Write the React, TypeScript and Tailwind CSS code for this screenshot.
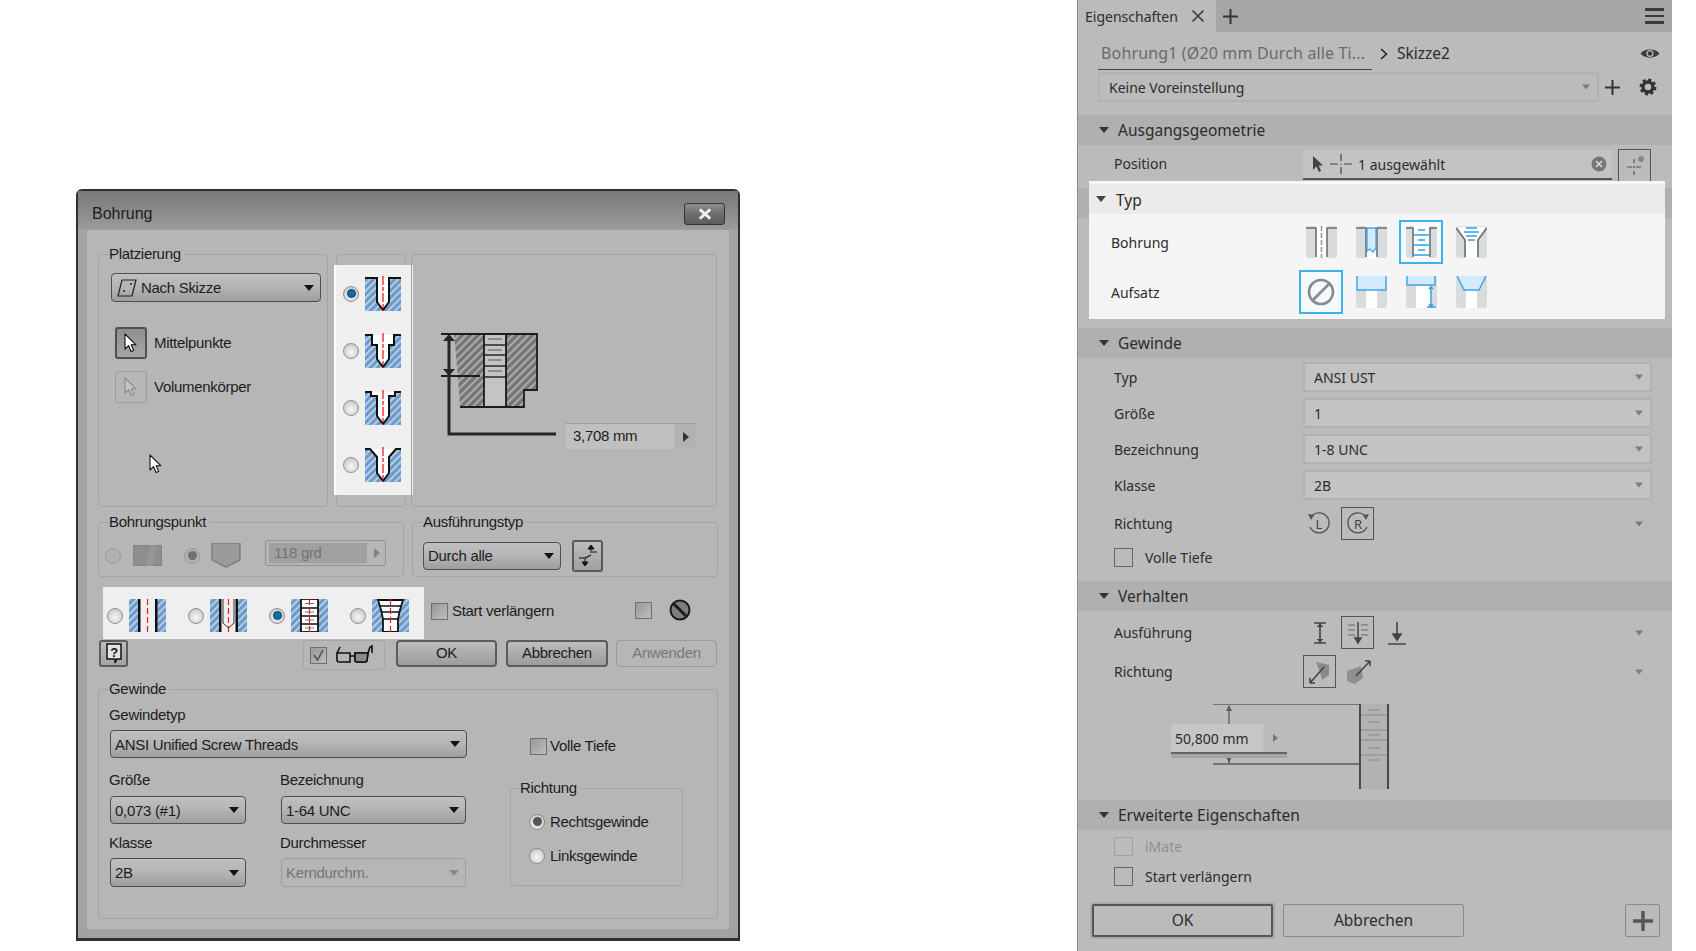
import React from "react";

const Tri = ({ c = "#111", w = 10, h = 6 }: { c?: string; w?: number; h?: number }) => (
  <svg width={w} height={h} viewBox="0 0 10 6"><polygon points="0,0 10,0 5,6" fill={c} /></svg>
);

const Radio = ({ on, dim, gray }: { on?: boolean; dim?: boolean; gray?: boolean }) => (
  <span className={`w-[16px] h-[16px] shrink-0 rounded-full border border-[#8f8f8f] flex items-center justify-center ${dim ? "bg-[#b0b0b0] opacity-70" : "bg-[radial-gradient(circle_at_50%_60%,#f8f8f8,#bdbdbd)]"}`}>
    {on && <span className={`w-[9px] h-[9px] rounded-full ${gray ? "bg-[#555555]" : "bg-[#0f6ea8] border border-[#0a4468]"}`} />}
  </span>
);

const Check = ({ on }: { on?: boolean }) => (
  <span className="w-[17px] h-[17px] shrink-0 border border-[#6f6f6f] bg-gradient-to-br from-[#999999] to-[#bdbdbd] flex items-center justify-center">
    {on && <svg width="13" height="13" viewBox="0 0 13 13"><path d="M2 6 L5.5 11 L11 1" fill="none" stroke="#555" strokeWidth="1.6" /></svg>}
  </span>
);

const Combo = ({ text, cls, dis, icon }: { text: string; cls: string; dis?: boolean; icon?: React.ReactNode }) => (
  <div className={`${cls} shrink-0 rounded-[4px] flex items-center pl-[4px] pr-[6px] ${dis ? "border border-[#9c9c9c] bg-[#b6b6b6] text-[#757575]" : "border border-[#4f4f4f] bg-gradient-to-b from-[#c0c0c0] via-[#b4b4b4] to-[#9e9e9e] text-[#1c1c1c]"}`}>
    {icon}
    <span className="flex-1 text-[15px] leading-none">{text}</span>
    <Tri c={dis ? "#8a8a8a" : "#111"} />
  </div>
);

const Btn = ({ text, cls }: { text: string; cls: string }) => (
  <div className={`${cls} rounded-[4px] flex items-center justify-center text-[15px] h-[27px] shrink-0`}>{text}</div>
);
const btnOn = "border-2 border-[#5c5c5c] bg-gradient-to-b from-[#bdbdbd] to-[#9c9c9c] text-[#1c1c1c]";

const Group = ({ label, cls, children, labelCls = "left-[10px]" }: { label?: string; cls: string; children?: React.ReactNode; labelCls?: string }) => (
  <div className={`relative shrink-0 border border-[#a4a4a4] rounded-[4px] ${cls}`}>
    {label && <span className={`absolute -top-[10px] ${labelCls} bg-[#b6b6b6] pr-[3px] text-[15px] leading-[18px] text-[#1c1c1c]`}>{label}</span>}
    {children}
  </div>
);

const Defs = () => (
  <defs>
    <pattern id="blueH" width="5" height="5" patternUnits="userSpaceOnUse" patternTransform="rotate(45)">
      <rect width="5" height="5" fill="#6d9ac9" />
      <rect width="1.6" height="5" fill="#c3d8ec" />
    </pattern>
    <pattern id="grayH" width="5.5" height="5.5" patternUnits="userSpaceOnUse" patternTransform="rotate(45)">
      <rect width="5.5" height="5.5" fill="#767676" />
      <rect width="2" height="5.5" fill="#adadad" />
    </pattern>
  </defs>
);

const holes = [
  "M0 2H12V26L18 34L24 26V2H36",
  "M0 2H7V12H12V26L18 34L24 26V12H29V2H36",
  "M0 2H6V6H12V26L18 34L24 26V6H30V2H36",
  "M0 2H5L12 10V26L18 34L24 26V10L31 2H36",
];
const HoleIcon = ({ k }: { k: number }) => (
  <svg width="36" height="35" viewBox="0 0 36 35" className="shrink-0">
    <Defs />
    <rect x="0" y="2" width="36" height="33" fill="url(#blueH)" />
    <path d={holes[k]} fill="#ffffff" stroke="#111" strokeWidth="2" />
    <line x1="18" y1="0" x2="18" y2="35" stroke="#ee1c25" strokeWidth="1.3" strokeDasharray="9 2 4 2" />
  </svg>
);

const TypeIcon = ({ k }: { k: number }) => (
  <svg width="37" height="33" viewBox="0 0 37 33" className="shrink-0">
    <Defs />
    {k < 3 && <rect x="0" y="0" width="10" height="33" fill="url(#blueH)" />}
    {k < 3 && <rect x="27" y="0" width="10" height="33" fill="url(#blueH)" />}
    {k === 0 && <><rect x="9" y="0" width="2.5" height="33" fill="#111" /><rect x="26" y="0" width="2.5" height="33" fill="#111" /></>}
    {k === 1 && <>
      <rect x="9" y="0" width="2.5" height="33" fill="#111" /><rect x="25.5" y="0" width="2.5" height="33" fill="#111" />
      <path d="M13 0V24L18.5 29L24 24V0" fill="none" stroke="#333" strokeWidth="1" />
    </>}
    {k === 2 && <>
      <rect x="10" y="0" width="17" height="33" fill="#fff" stroke="#111" strokeWidth="1.8" />
      {[9, 17, 25].map((y) => <line key={y} x1="10" x2="27" y1={y} y2={y} stroke="#111" strokeWidth="1.5" />)}
      {[4.5, 13, 21, 29].map((y) => <line key={y} x1="14" x2="23" y1={y} y2={y} stroke="#777" strokeWidth="1" />)}
    </>}
    {k === 3 && <>
      <rect x="0" y="0" width="37" height="33" fill="url(#blueH)" />
      <path d="M6 1H31L28 11L26 20V33H11V20L9 11Z" fill="#fff" stroke="#111" strokeWidth="1.8" />
      <path d="M8 7H29M10 13H27M11 20H26" stroke="#111" strokeWidth="1.4" />
    </>}
    <line x1="18.5" y1="0" x2="18.5" y2="33" stroke="#ee1c25" strokeWidth="1.2" strokeDasharray="6 3" />
  </svg>
);

const Diagram = () => (
  <svg width="122" height="110" viewBox="0 0 122 110" className="shrink-0">
    <Defs />
    <path d="M15 4H45V77H21L19 46Z" fill="url(#grayH)" />
    <path d="M67 4H98V60H85V77H67Z" fill="url(#grayH)" stroke="#1c1c1c" strokeWidth="1.8" />
    <rect x="45" y="4" width="22" height="73" fill="#c4c4c4" stroke="#1c1c1c" strokeWidth="1.8" />
    {[15, 25, 36, 47].map((y) => <line key={y} x1="45" x2="67" y1={y} y2={y} stroke="#1c1c1c" strokeWidth="1.4" />)}
    {[9, 20, 30, 41].map((y) => <line key={y} x1="49" x2="63" y1={y} y2={y} stroke="#777" strokeWidth="1.4" />)}
    <line x1="2" x2="98" y1="4" y2="4" stroke="#1c1c1c" strokeWidth="2" />
    <line x1="2" x2="41" y1="46" y2="46" stroke="#1c1c1c" strokeWidth="2" />
    <line x1="21" x2="85" y1="77" y2="77" stroke="#1c1c1c" strokeWidth="2" />
    <path d="M10 8V104H117" fill="none" stroke="#262626" strokeWidth="3" />
    <polygon points="10,4 4,11 16,11" fill="#262626" />
    <polygon points="10,46 4,39 16,39" fill="#262626" />
  </svg>
);

const Cursor = ({ c = "#fff", s = "#111", size = 20 }: { c?: string; s?: string; size?: number }) => (
  <svg width={size * 0.7} height={size} viewBox="0 0 14 20"><path d="M1 1V16L4.6 12.6L7 18.5L9.6 17.4L7.2 11.8H12Z" fill={c} stroke={s} strokeWidth="1.1" strokeLinejoin="round" /></svg>
);

const Dialog = () => (
  <div className="w-[664px] h-[752px] mt-[189px] ml-[76px] shrink-0 border-x-2 border-t-2 border-b-[3px] border-[#303030] rounded-t-[6px] bg-[#a2a2a2] font-['Liberation_Sans',sans-serif] tracking-[-0.3px] flex flex-col">
    <div className="h-[39px] shrink-0 bg-gradient-to-b from-[#787878] to-[#9c9c9c] flex items-center pt-[7px] pl-[14px] pr-[13px] justify-between">
      <span className="text-[16px] text-[#1c1c1c] tracking-normal">Bohrung</span>
      <div className="w-[41px] h-[22px] border border-[#333333] rounded-[3px] bg-gradient-to-b from-[#8d8d8d] via-[#6e6e6e] to-[#5c5c5c] flex items-center justify-center">
        <svg width="14" height="12" viewBox="0 0 12 10"><path d="M1.5 1 L10.5 9 M10.5 1 L1.5 9" stroke="#f0f0f0" strokeWidth="2.4" /></svg>
      </div>
    </div>
    <div className="mx-[9px] h-[699px] bg-[#b6b6b6] pl-[11px] pt-[24px] flex flex-col">
      <div className="flex">
        <Group label="Platzierung" cls="w-[230px] h-[253px] pl-[12px] pt-[18px]">
          <Combo text="Nach Skizze" cls="w-[210px] h-[29px]" icon={
            <svg width="22" height="20" viewBox="0 0 22 20" className="mr-[3px] shrink-0"><path d="M6 2H20L16 18H2Z" fill="none" stroke="#222" strokeWidth="1.2" /><path d="M7 13h2M8 12v2M14 6h2M15 5v2" stroke="#222" strokeWidth="1" /></svg>
          } />
          <div className="flex items-center mt-[25px] ml-[4px]">
            <div className="w-[32px] h-[32px] border-2 border-[#505050] rounded-[3px] bg-gradient-to-b from-[#8f8f8f] to-[#a6a6a6] flex items-center justify-center"><Cursor /></div>
            <span className="ml-[7px] text-[15px] text-[#1c1c1c]">Mittelpunkte</span>
          </div>
          <div className="flex items-center mt-[12px] ml-[4px]">
            <div className="w-[32px] h-[32px] border border-[#9c9c9c] rounded-[3px] flex items-center justify-center"><Cursor c="#c4c4c4" s="#8c8c8c" /></div>
            <span className="ml-[7px] text-[15px] text-[#1c1c1c]">Volumenkörper</span>
          </div>
          <div className="absolute left-[50px] top-[199px]"><Cursor /></div>
        </Group>
        <Group cls="w-[70px] h-[253px] ml-[8px]">
          <div className="absolute -left-[3px] top-[10px] w-[79px] h-[230px] bg-[#efefef] border-l-2 border-white pl-[7px] pt-[11px] flex flex-col gap-[22px]">
            {[0, 1, 2, 3].map((k) => (
              <div key={k} className="flex items-center gap-[6px]"><Radio on={k === 0} /><HoleIcon k={k} /></div>
            ))}
          </div>
        </Group>
        <Group cls="w-[306px] h-[253px] ml-[5px] pl-[27px] pt-[75px] flex items-start">
          <Diagram />
          <div className="ml-[5px] mt-[93px] w-[130px] h-[26px] shrink-0 border-t border-[#9a9a9a] bg-[#c0c0c0] flex items-center pl-[7px] text-[15px] text-[#1c1c1c]">
            <span className="flex-1">3,708 mm</span>
            <span className="w-[21px] h-full bg-[#b2b2b2] flex items-center justify-center">
              <svg width="6" height="10" viewBox="0 0 6 10"><polygon points="0,0 6,5 0,10" fill="#333" /></svg>
            </span>
          </div>
        </Group>
      </div>
      <div className="flex mt-[15px]">
        <Group label="Bohrungspunkt" cls="w-[306px] h-[55px] pl-[6px] pt-[12px] flex items-center">
          <Radio dim />
          <svg width="29" height="21" viewBox="0 0 29 21" className="ml-[12px] shrink-0"><rect x="0" y="0" width="29" height="21" fill="#8e8e8e" stroke="#7c7c7c" /><path d="M17 0L13 21H20L24 0Z" fill="#969696" /></svg>
          <span className="ml-[22px]"><Radio on dim gray /></span>
          <svg width="30" height="25" viewBox="0 0 30 25" className="ml-[11px] shrink-0"><path d="M1 0V17L15 24L29 17V0Z" fill="#9a9a9a" stroke="#737373" strokeWidth="1.2" /></svg>
          <div className="ml-[24px] -mt-[6px] w-[121px] h-[26px] border border-[#929292] rounded-[2px] bg-[#b6b6b6] flex items-center text-[15px] text-[#737373]">
            <span className="w-[98px] h-[20px] ml-[3px] bg-[#a0a0a0] pl-[5px] leading-[20px]">118 grd</span>
            <svg width="6" height="10" viewBox="0 0 6 10" className="ml-[7px]"><polygon points="0,0 6,5 0,10" fill="#828282" /></svg>
          </div>
        </Group>
        <Group label="Ausführungstyp" cls="w-[306px] h-[55px] ml-[8px] pl-[10px] pt-[12px] flex items-center">
          <Combo text="Durch alle" cls="w-[138px] h-[28px]" />
          <div className="ml-[11px] w-[31px] h-[32px] border-2 border-[#5a5a5a] rounded-[3px] bg-gradient-to-b from-[#bdbdbd] to-[#a0a0a0] flex items-center justify-center">
            <svg width="22" height="24" viewBox="0 0 22 24"><path d="M2 14h5M15 8h5M14 11l-6 3" stroke="#111" strokeWidth="1.1" /><path d="M14 9V3M14 1l-3 4h6Z" fill="#111" stroke="#111" /><path d="M8 13v7M8 22l-3-4h6Z" fill="#111" stroke="#111" /></svg>
          </div>
        </Group>
      </div>
      <div className="flex mt-[10px] h-[52px] items-start w-[620px]">
        <div className="ml-[5px] w-[321px] h-[52px] bg-[#efefef] pl-[4px] pt-[5px] flex items-center gap-[22px] shrink-0">
          {[0, 1, 2, 3].map((k) => (
            <div key={k} className="flex items-center gap-[6px]"><Radio on={k === 2} /><TypeIcon k={k} /></div>
          ))}
        </div>
        <div className="ml-[7px] mt-[13px] flex items-center">
          <Check />
          <span className="ml-[4px] text-[15px] text-[#1c1c1c]">Start verlängern</span>
        </div>
        <div className="ml-auto mr-[27px] mt-[12px] flex items-center">
          <Check />
          <svg width="22" height="22" viewBox="0 0 22 22" className="ml-[17px]"><circle cx="11" cy="11" r="9.5" fill="#7e7e7e" stroke="#1c1c1c" strokeWidth="2" /><path d="M5 5L17 17" stroke="#1c1c1c" strokeWidth="3" /></svg>
        </div>
      </div>
      <div className="flex mt-[1px] items-start w-[620px]">
        <div className="ml-[1px] w-[29px] h-[27px] border-2 border-[#5c5c5c] rounded-[3px] bg-gradient-to-b from-[#bdbdbd] to-[#a4a4a4] flex items-center justify-center shrink-0">
          <svg width="20" height="22" viewBox="0 0 20 22"><path d="M3 1H17V16H13L11 20V16H3Z" fill="#e4e4e4" stroke="#111" strokeWidth="1.5" /><text x="10" y="13.5" textAnchor="middle" fontSize="13" fontWeight="700" fill="#111" fontFamily="Liberation Sans">?</text></svg>
        </div>
        <div className="ml-[175px] w-[82px] h-[30px] border border-[#a6a6a6] rounded-[4px] flex items-center pl-[6px] shrink-0">
          <Check on />
          <svg width="39" height="20" viewBox="0 0 39 20" className="ml-[8px]"><path d="M2 8H15V17H4A2 2 0 0 1 2 15ZM20 8H33L32 15A2 2 0 0 1 30 17H22A2 2 0 0 1 20 15ZM15 11H20M33 8L35 2L37 1V8M2 8L5 2" fill="none" stroke="#111" strokeWidth="1.6" /><path d="M20 8H33L32 15A2 2 0 0 1 30 17H22A2 2 0 0 1 20 15Z" fill="#8a8a8a" stroke="#111" strokeWidth="1.6" /></svg>
        </div>
        <Btn text="OK" cls={`w-[101px] ml-[11px] ${btnOn}`} />
        <Btn text="Abbrechen" cls={`w-[102px] ml-[9px] ${btnOn}`} />
        <Btn text="Anwenden" cls="w-[101px] ml-[8px] border border-[#9a9a9a] text-[#787878]" />
      </div>
      <Group label="Gewinde" cls="w-[620px] h-[230px] mt-[19px] pl-[11px] flex">
        <div className="w-[357px] shrink-0 pt-[16px] flex flex-col">
          <span className="-ml-[1px] h-[18px] leading-[18px] text-[15px] text-[#1c1c1c]">Gewindetyp</span>
          <Combo text="ANSI Unified Screw Threads" cls="w-[357px] h-[28px] mt-[6px]" />
          <div className="flex mt-[13px]">
            <div className="w-[136px] flex flex-col shrink-0">
              <span className="-ml-[1px] h-[18px] leading-[18px] text-[15px] text-[#1c1c1c]">Größe</span>
              <Combo text="0,073 (#1)" cls="w-[136px] h-[28px] mt-[7px]" />
              <span className="-ml-[1px] mt-[10px] h-[18px] leading-[18px] text-[15px] text-[#1c1c1c]">Klasse</span>
              <Combo text="2B" cls="w-[136px] h-[29px] mt-[6px]" />
            </div>
            <div className="w-[185px] ml-[35px] flex flex-col shrink-0">
              <span className="-ml-[1px] h-[18px] leading-[18px] text-[15px] text-[#1c1c1c]">Bezeichnung</span>
              <Combo text="1-64 UNC" cls="w-[185px] h-[28px] mt-[7px]" />
              <span className="-ml-[1px] mt-[10px] h-[18px] leading-[18px] text-[15px] text-[#1c1c1c]">Durchmesser</span>
              <Combo text="Kerndurchm." dis cls="w-[185px] h-[29px] mt-[6px]" />
            </div>
          </div>
        </div>
        <div className="ml-[43px] pt-[45px] flex flex-col shrink-0">
          <div className="ml-[20px] flex items-center">
            <Check /><span className="ml-[3px] text-[15px] text-[#1c1c1c]">Volle Tiefe</span>
          </div>
          <Group label="Richtung" labelCls="left-[9px]" cls="w-[173px] h-[98px] mt-[30px] pl-[18px] pt-[22px] flex flex-col gap-[12px]">
            <div className="flex items-center gap-[5px]"><Radio on gray /><span className="text-[15px] text-[#1c1c1c]">Rechtsgewinde</span></div>
            <div className="flex items-center gap-[5px]"><Radio /><span className="text-[15px] text-[#1c1c1c]">Linksgewinde</span></div>
          </Group>
        </div>
      </Group>
    </div>
  </div>
);

const Head = ({ t, cls = "mt-0" }: { t: string; cls?: string }) => (
  <div className={`h-[30px] shrink-0 bg-[#b0b0b0] flex items-center pl-[21px] text-[15.5px] text-[#2c2c2c] ${cls}`}>
    <Tri c="#333" />
    <span className="ml-[9px] translate-y-[1px]">{t}</span>
  </div>
);

const Sel = ({ l, v, cls }: { l: string; v: string; cls: string }) => (
  <div className={`flex items-center pl-[36px] h-[30px] ${cls}`}>
    <span className="w-[189px] text-[14px] text-[#2c2c2c]">{l}</span>
    <div className="w-[349px] h-[30px] border-2 border-[#b2b2b2] bg-[#c3c3c3] flex items-center pl-[9px] pr-[7px] text-[14px] text-[#2c2c2c]">
      <span className="flex-1">{v}</span><Tri c="#7c7c7c" w={8} h={6} />
    </div>
  </div>
);

const Box = ({ children, cls = "" }: { children?: React.ReactNode; cls?: string }) => (
  <div className={`w-[33px] h-[33px] border border-[#555555] flex items-center justify-center shrink-0 ${cls}`}>{children}</div>
);

const PBox = ({ children, sel }: { children?: React.ReactNode; sel?: boolean }) => (
  <div className={`w-[44px] h-[44px] shrink-0 flex items-center justify-center ${sel ? "border-2 border-[#3fb1e8] bg-[#f4fbff]" : ""}`}>{children}</div>
);

const I = ({ children }: { children: React.ReactNode }) => (
  <svg width="31" height="32" viewBox="0 0 31 32">{children}</svg>
);
const GrayBg = () => <rect x="0" y="0" width="31" height="32" rx="3" fill="#d9dcdd" />;
const Flanges = () => <path d="M0 2H10V31M31 2H21V31" fill="none" stroke="#6e6e6e" strokeWidth="1.6" />;

const Panel = () => (
  <div className="w-[595px] h-[951px] ml-[337px] shrink-0 bg-[#bbbbbb] border-l border-[#8a8a8a] font-['Noto_Sans',sans-serif] flex flex-col overflow-hidden">
    <div className="h-[32px] shrink-0 bg-[#a6a6a6] flex items-stretch pr-[8px]">
      <div className="w-[138px] bg-[#bbbbbb] flex items-center pl-[7px] text-[14px] text-[#2c2c2c]">
        <span className="flex-1">Eigenschaften</span>
        <svg width="14" height="14" viewBox="0 0 14 14" className="mr-[11px]"><path d="M1.5 1.5L12.5 12.5M12.5 1.5L1.5 12.5" stroke="#333" strokeWidth="1.5" /></svg>
      </div>
      <div className="w-[28px] flex items-center justify-center">
        <svg width="15" height="15" viewBox="0 0 15 15"><path d="M7.5 0V15M0 7.5H15" stroke="#333" strokeWidth="2" /></svg>
      </div>
      <div className="ml-auto flex flex-col justify-center gap-[4px]">
        <span className="block w-[19px] h-[2.5px] bg-[#3a3a3a]" /><span className="block w-[19px] h-[2.5px] bg-[#3a3a3a]" /><span className="block w-[19px] h-[2.5px] bg-[#3a3a3a]" />
      </div>
    </div>
    <div className="h-[33px] shrink-0 mt-[5px] flex items-center pl-[20px] pr-[12px]">
      <div className="w-[274px] h-[33px] border-b border-[#444444] pl-[3px] flex items-center text-[16px] tracking-[0.15px] text-[#6a6a6a] whitespace-nowrap overflow-hidden">Bohrung1 (Ø20 mm Durch alle Ti...</div>
      <svg width="8" height="12" viewBox="0 0 8 12" className="ml-[8px]"><path d="M1 1L6.5 6L1 11" fill="none" stroke="#222" strokeWidth="1.6" /></svg>
      <span className="ml-[9px] text-[15.5px] text-[#2c2c2c]">Skizze2</span>
      <svg width="20" height="13" viewBox="0 0 20 13" className="ml-auto"><path d="M0.5 6.5C4 1 16 1 19.5 6.5C16 12 4 12 0.5 6.5Z" fill="#3a3a3a" /><circle cx="10" cy="6.5" r="3.6" fill="#bbb" /><circle cx="10" cy="6.5" r="2.2" fill="#3a3a3a" /></svg>
    </div>
    <div className="h-[30px] shrink-0 mt-[2px] flex items-center pl-[20px]">
      <div className="w-[501px] h-[30px] border-2 border-[#b2b2b2] flex items-center pl-[9px] pr-[7px] text-[14px] text-[#2c2c2c]">
        <span className="flex-1">Keine Voreinstellung</span><Tri c="#7c7c7c" w={8} h={6} />
      </div>
      <svg width="15" height="15" viewBox="0 0 15 15" className="ml-[6px]"><path d="M7.5 0V15M0 7.5H15" stroke="#333" strokeWidth="2" /></svg>
      <svg width="18" height="18" viewBox="0 0 18 18" className="ml-[19px]"><circle cx="9" cy="9" r="5" fill="none" stroke="#333" strokeWidth="3.4" /><circle cx="9" cy="9" r="7.2" fill="none" stroke="#333" strokeWidth="2.6" strokeDasharray="3 2.65" /></svg>
    </div>
    <Head t="Ausgangsgeometrie" cls="mt-[13px]" />
    <div className="h-[30px] shrink-0 mt-[5px] flex items-center pl-[36px]">
      <span className="w-[189px] -mt-[3px] text-[14px] text-[#2c2c2c]">Position</span>
      <div className="w-[309px] h-[30px] bg-[#c3c3c3] border-b-2 border-[#555555] flex items-center pl-[9px] pr-[5px] text-[14px] text-[#2c2c2c]">
        <svg width="12" height="18" viewBox="0 0 12 18"><path d="M1 1V15L4.4 11.5L7 17L9 16L6.8 10.5H11Z" fill="#444" /></svg>
        <svg width="22" height="20" viewBox="0 0 22 20" className="ml-[6px]"><path d="M11 0V7M11 10V11M11 13V20M0 10H8M14 10H22" stroke="#444" strokeWidth="1.2" /></svg>
        <span className="ml-[6px] flex-1">1 ausgewählt</span>
        <svg width="16" height="16" viewBox="0 0 16 16"><circle cx="8" cy="8" r="7.5" fill="#777" /><path d="M5 5L11 11M11 5L5 11" stroke="#ddd" strokeWidth="1.5" /></svg>
      </div>
      <Box cls="ml-[6px] w-[33px] h-[30px]">
        <svg width="24" height="24" viewBox="0 0 24 24"><path d="M11 6V10M11 13V15M11 18V22M4 14H9M13 14H18" stroke="#555" strokeWidth="1.2" /><circle cx="18" cy="6" r="3" fill="#888" /></svg>
      </Box>
    </div>
    <div className="relative h-[138px] shrink-0 mt-[1px]">
      <div className="absolute inset-x-0 top-[7px] h-[30px] bg-[#b0b0b0]" />
      <div className="absolute left-[11px] w-[576px] h-[138px] bg-[#f5f5f5] flex flex-col">
        <div className="h-[33px] shrink-0 bg-[#ebebeb] border-t-[3px] border-[#f7f7f7] flex items-center pl-[7px] text-[15.5px] text-[#2c2c2c]">
          <Tri c="#444" /><span className="ml-[10px] translate-y-[2px]">Typ</span>
        </div>
        <div className="flex items-center pl-[22px] mt-[6px] h-[44px]">
          <span className="w-[188px] text-[14px] text-[#2c2c2c]">Bohrung</span>
          <div className="flex gap-[6px] items-center">
            <PBox><I><GrayBg /><rect x="10" y="0" width="11" height="32" fill="#fff" /><Flanges /><path d="M15.5 0V32" stroke="#9a9a9a" strokeWidth="1.6" strokeDasharray="5 2" /></I></PBox>
            <PBox><I><GrayBg /><rect x="10" y="0" width="11" height="32" fill="#fff" /><Flanges /><path d="M11 2H20V22L17 26L14 23L11 25Z" fill="#d4ebfd" stroke="#3ea4e8" strokeWidth="1.3" /></I></PBox>
            <PBox sel><I><GrayBg /><rect x="7" y="0" width="17" height="32" fill="#fff" /><path d="M0 2H7V31M31 2H24V31" fill="none" stroke="#6e6e6e" strokeWidth="1.6" /><path d="M12 4H19M7 9H24M12 14H19M7 19H24M12 24H19M7 29H24" stroke="#2f9ee6" strokeWidth="1.4" /></I></PBox>
            <PBox><I><GrayBg /><path d="M2 1H29L21 14V32H10V14Z" fill="#fff" /><path d="M0 2L9 14V31M31 2L22 14V31" fill="none" stroke="#6e6e6e" strokeWidth="1.6" /><path d="M10 2H21M8 6H23M10 10H21M12 14H19" stroke="#2f9ee6" strokeWidth="1.3" /></I></PBox>
          </div>
        </div>
        <div className="flex items-center pl-[22px] mt-[6px] h-[44px]">
          <span className="w-[188px] text-[14px] text-[#2c2c2c]">Aufsatz</span>
          <div className="flex gap-[6px] items-center">
            <PBox sel><svg width="28" height="28" viewBox="0 0 28 28"><circle cx="14" cy="14" r="12" fill="none" stroke="#8a8a8a" strokeWidth="2.6" /><path d="M5.5 22.5L22.5 5.5" stroke="#8a8a8a" strokeWidth="2.6" /></svg></PBox>
            <PBox><I><GrayBg /><rect x="10" y="14" width="11" height="18" fill="#fff" /><path d="M1 0V14H30V0" fill="#d4ebfd" stroke="#3ea4e8" strokeWidth="1.4" /></I></PBox>
            <PBox><I><GrayBg /><rect x="10" y="10" width="14" height="22" fill="#fff" /><path d="M1 0V9H29V0" fill="#d4ebfd" stroke="#3ea4e8" strokeWidth="1.4" /><path d="M25 11V31M21 31H30M23 13L25 10.5L27 13M23 28L25 30.5L27 28" fill="none" stroke="#2f9ee6" strokeWidth="1.3" /></I></PBox>
            <PBox><I><GrayBg /><rect x="10" y="14" width="11" height="18" fill="#fff" /><path d="M1 0L8 14H23L30 0Z" fill="#d4ebfd" /><path d="M1 0L8 14H23L30 0" fill="none" stroke="#3ea4e8" strokeWidth="1.5" /></I></PBox>
          </div>
        </div>
      </div>
    </div>
    <Head t="Gewinde" cls="mt-[9px]" />
    <Sel l="Typ" v="ANSI UST" cls="mt-[4px]" />
    <Sel l="Größe" v="1" cls="mt-[6px]" />
    <Sel l="Bezeichnung" v="1-8 UNC" cls="mt-[6px]" />
    <Sel l="Klasse" v="2B" cls="mt-[6px]" />
    <div className="flex items-center pl-[36px] pr-[29px] mt-[7px] h-[33px] shrink-0">
      <span className="w-[189px] text-[14px] text-[#2c2c2c]">Richtung</span>
      <svg width="26" height="26" viewBox="0 0 26 26" className="ml-[3px]"><path d="M5 6A10 10 0 1 1 4 16" fill="none" stroke="#555" strokeWidth="1.4" /><polygon points="2,3 8,4 5,9" fill="#555" /><text x="13" y="18" textAnchor="middle" fontSize="13" fill="#444" fontFamily="Noto Sans">L</text></svg>
      <Box cls="ml-[9px]"><svg width="26" height="26" viewBox="0 0 26 26"><path d="M21 6A10 10 0 1 0 22 16" fill="none" stroke="#555" strokeWidth="1.4" /><polygon points="24,3 18,4 21,9" fill="#555" /><text x="13" y="18" textAnchor="middle" fontSize="13" fill="#444" fontFamily="Noto Sans">R</text></svg></Box>
      <span className="ml-auto"><Tri c="#7c7c7c" w={8} h={6} /></span>
    </div>
    <div className="flex items-center pl-[36px] mt-[8px] h-[19px] shrink-0">
      <span className="w-[19px] h-[19px] border border-[#666666]" />
      <span className="ml-[12px] text-[14px] text-[#2c2c2c]">Volle Tiefe</span>
    </div>
    <Head t="Verhalten" cls="mt-[14px]" />
    <div className="flex items-center pl-[36px] pr-[29px] mt-[5px] h-[33px] shrink-0">
      <span className="w-[189px] text-[14px] text-[#2c2c2c]">Ausführung</span>
      <svg width="20" height="24" viewBox="0 0 20 24" className="ml-[7px]"><path d="M4 2H16M10 2V22M4 22H16" stroke="#444" strokeWidth="1.6" /><path d="M7 6L10 3L13 6M7 18L10 21L13 18" fill="#444" stroke="#444" /></svg>
      <Box cls="ml-[11px]"><svg width="22" height="24" viewBox="0 0 22 24"><path d="M11 1V21M8 17L11 22L14 17Z" stroke="#444" strokeWidth="1.5" fill="#444" /><path d="M1 4H8M1 9H8M1 14H8M14 4H21M14 9H21M14 14H21" stroke="#666" strokeWidth="1.2" /></svg></Box>
      <svg width="20" height="24" viewBox="0 0 20 24" className="ml-[13px]"><path d="M10 1V17M6 13L10 19L14 13ZM1 23H19" stroke="#444" strokeWidth="1.6" fill="#444" /></svg>
      <span className="ml-auto"><Tri c="#7c7c7c" w={8} h={6} /></span>
    </div>
    <div className="flex items-center pl-[36px] pr-[29px] mt-[6px] h-[33px] shrink-0">
      <span className="w-[189px] text-[14px] text-[#2c2c2c]">Richtung</span>
      <Box>
        <svg width="26" height="26" viewBox="0 0 26 26"><path d="M9 3L22 6V16L15 21L13 13Z" fill="#8a8a8a" /><path d="M3 24L17 8M3 24V19M3 24H8" fill="none" stroke="#444" strokeWidth="1.6" /></svg>
      </Box>
      <svg width="26" height="26" viewBox="0 0 26 26" className="ml-[10px]"><path d="M1 12L15 7L17 19L9 25L1 22Z" fill="#8f8f8f" /><path d="M10 17L24 2M24 2H19M24 2V7" fill="none" stroke="#444" strokeWidth="1.6" /></svg>
      <span className="ml-auto"><Tri c="#7c7c7c" w={8} h={6} /></span>
    </div>
    <div className="relative h-[85px] shrink-0 mt-[16px] pl-[93px] pt-[20px]">
      <svg width="228" height="85" viewBox="0 0 228 85" className="absolute left-[93px] top-0">
        <path d="M42 0H190M42 60H190M58 2V20M58 55V60" stroke="#5c5c5c" strokeWidth="1.3" />
        <polygon points="58,1 55,7 61,7" fill="#5c5c5c" /><polygon points="58,59 55,53 61,53" fill="#5c5c5c" />
        <rect x="189" y="0" width="28" height="85" fill="#b2b2b2" />
        <path d="M189 0V85M217 0V85" stroke="#4a4a4a" strokeWidth="2" />
        {[11, 26, 36, 51].map((y) => <line key={y} x1="190" x2="216" y1={y} y2={y} stroke="#8a8a8a" />)}
        {[6, 18, 31, 44, 56].map((y) => <line key={y} x1="197" x2="209" y1={y} y2={y} stroke="#8a8a8a" />)}
      </svg>
      <div className="relative w-[116px] h-[28px] bg-[#c6c6c6] flex items-center pl-[4px] text-[14px] text-[#2c2c2c]">
        <span className="flex-1">50,800 mm</span>
        <span className="w-[24px] h-full bg-[#bcbcbc] flex items-center justify-center"><svg width="5" height="8" viewBox="0 0 5 8"><polygon points="0,0 5,4 0,8" fill="#777" /></svg></span>
      </div>
      <div className="relative w-[116px] h-[6px] bg-[#a6a6a6] border-t-2 border-[#666666]" />
    </div>
    <Head t="Erweiterte Eigenschaften" cls="mt-[11px]" />
    <div className="flex items-center pl-[36px] mt-[7px] h-[19px] shrink-0">
      <span className="w-[19px] h-[19px] border border-[#a2a2a2]" />
      <span className="ml-[12px] text-[14px] text-[#8f8f8f]">iMate</span>
    </div>
    <div className="flex items-center pl-[36px] mt-[11px] h-[19px] shrink-0">
      <span className="w-[19px] h-[19px] border border-[#666666]" />
      <span className="ml-[12px] text-[14px] text-[#2c2c2c]">Start verlängern</span>
    </div>
    <div className="flex items-center mt-[18px] pl-[14px] shrink-0 text-[15.5px] text-[#2c2c2c]">
      <div className="w-[181px] h-[33px] border-2 border-[#555555] rounded-[2px] shadow-[0_0_0_2px_#a8a8a8] flex items-center justify-center">OK</div>
      <div className="w-[181px] h-[33px] ml-[10px] border border-[#8a8a8a] rounded-[2px] flex items-center justify-center">Abbrechen</div>
      <div className="w-[35px] h-[33px] ml-[161px] border border-[#8a8a8a] rounded-[2px] flex items-center justify-center">
        <svg width="22" height="22" viewBox="0 0 22 22"><path d="M11 1V21M1 11H21" stroke="#555" strokeWidth="3.4" /></svg>
      </div>
    </div>
  </div>
);

export default function App() {
  return (
    <div className="w-[1696px] h-[951px] bg-white flex items-start overflow-hidden">
      <Dialog />
      <Panel />
    </div>
  );
}
